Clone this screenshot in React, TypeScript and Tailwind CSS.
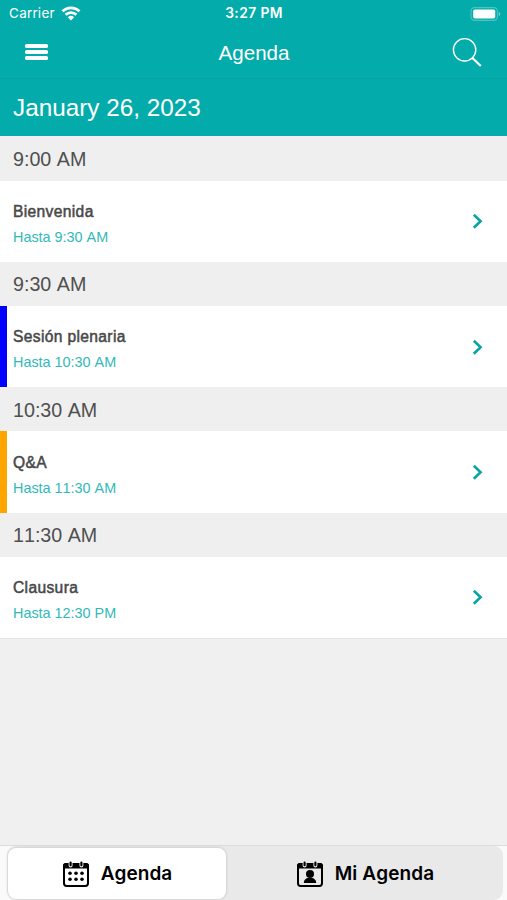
import { clsx } from 'clsx';

type Session = {
    start: string;
    title: string;
    until: string;
    marker?: string;
};

const sessions: Session[] = [
    { start: '9:00 AM', title: 'Bienvenida', until: 'Hasta 9:30 AM' },
    { start: '9:30 AM', title: 'Sesión plenaria', until: 'Hasta 10:30 AM', marker: 'bg-[#0000ff]' },
    { start: '10:30 AM', title: 'Q&A', until: 'Hasta 11:30 AM', marker: 'bg-[#ffa500]' },
    { start: '11:30 AM', title: 'Clausura', until: 'Hasta 12:30 PM' },
];

function WifiIcon() {
    return (
        <svg width="20" height="15" viewBox="0 0 20 15" fill="none" stroke="white" strokeWidth="2.7">
            <path d="M1.5 5.3a12.2 12.2 0 0 1 17 0" />
            <path d="M4.6 8.8a7.8 7.8 0 0 1 10.8 0" />
            <path d="M10 14.5 6.9 11.3a4.5 4.5 0 0 1 6.2 0Z" fill="white" stroke="none" />
        </svg>
    );
}

function BatteryIcon() {
    return (
        <svg width="31" height="14" viewBox="0 0 31 14">
            <rect x="1" y="0.6" width="26.4" height="12.8" rx="3.6" fill="none" stroke="#4dc4c3" strokeWidth="1.1" />
            <rect x="3.2" y="2.6" width="22" height="8.8" rx="1.6" fill="white" />
            <path d="M28.8 4.8c2 .8 2 3.6 0 4.4Z" fill="#6fd0cf" />
        </svg>
    );
}

function SearchIcon() {
    return (
        <svg width="31" height="31" viewBox="0 0 31 31" fill="none" stroke="white">
            <circle cx="12.6" cy="12.8" r="11.2" strokeWidth="1.4" />
            <path d="m20.4 21 8.4 8" strokeWidth="2.2" />
        </svg>
    );
}

function CalendarIcon({ person }: { person?: boolean }) {
    return (
        <svg width="26" height="27" viewBox="0 0 26 27">
            <rect x="1" y="3" width="24" height="21.9" rx="2.6" fill="none" stroke="black" strokeWidth="2" />
            <path d="M0 7.6V4.8A2.8 2.8 0 0 1 2.8 2h20.4A2.8 2.8 0 0 1 26 4.8v2.8Z" />
            <g stroke="#e4e4e4" strokeWidth="4" strokeLinecap="round">
                <path d="M7.6 2.4v2M18.4 2.4v2" />
            </g>
            <g stroke="black" strokeWidth="2.1" strokeLinecap="round">
                <path d="M7.6 1.6v2.6M18.4 1.6v2.6" />
            </g>
            {person ? (
                <g>
                    <circle cx="13" cy="13" r="4" />
                    <path d="M6.8 22c0-2.7 1.6-4.4 4-4.9h4.4c2.4.5 4 2.2 4 4.9Z" />
                </g>
            ) : (
                <g>
                    <circle cx="7" cy="12.2" r="1.8" />
                    <circle cx="13" cy="12.2" r="1.8" />
                    <circle cx="19" cy="12.2" r="1.8" />
                    <circle cx="7" cy="18.3" r="1.8" />
                    <circle cx="13" cy="18.3" r="1.8" />
                    <circle cx="19" cy="18.3" r="1.8" />
                </g>
            )}
        </svg>
    );
}

function SessionRow({ session }: { session: Session }) {
    return (
        <li>
            <h2 className="flex h-11 items-center bg-[#efefef] pt-0.5 pl-[13px] text-[19.7px] text-[#505050]">
                {session.start}
            </h2>
            <div className="flex h-[81.4px] items-center bg-white">
                <div className={clsx('h-full w-[7px]', session.marker)} />
                <div className="flex-1 pt-1.5 pl-1.5">
                    <p className="text-[15.6px] leading-5 tracking-[0.35px] text-[#484848] [-webkit-text-stroke:0.5px_#484848]">
                        {session.title}
                    </p>
                    <p className="mt-[5px] text-[14.4px] leading-5 text-[#32b9b7]">{session.until}</p>
                </div>
                <svg className="mr-6 h-4 w-[11px]" viewBox="0 0 11 16" fill="none">
                    <path d="m1.8 1.8 6.8 6.5-6.8 6.5" stroke="#08a5a3" strokeWidth="2.6" />
                </svg>
            </div>
        </li>
    );
}

export default function App() {
    return (
        <div className="flex h-[900px] w-[507px] flex-col overflow-hidden bg-[#f0f0f0] font-['Liberation_Sans',sans-serif] [font-kerning:none]">
            <header className="bg-[#03acaa] text-white">
                <div className="grid h-[27px] grid-cols-3 items-center pr-1.5 pl-[9px] font-[Inter,sans-serif] text-[13.5px]">
                    <div className="flex items-center gap-1.5">
                        <span className="tracking-[0.3px]">Carrier</span>
                        <WifiIcon />
                    </div>
                    <span className="pr-0.5 text-center text-[13.8px] font-semibold tracking-[0.4px]">3:27 PM</span>
                    <div className="flex justify-end">
                        <BatteryIcon />
                    </div>
                </div>
                <div className="flex h-[52px] items-center justify-between border-b border-[#04a3a1] pr-6 pl-[25px]">
                    <button type="button" aria-label="Menu" className="mb-0.5 flex w-[31px] flex-col gap-0.5">
                        <span className="h-1 w-[23px] rounded-[1.5px] bg-white" />
                        <span className="h-1 w-[23px] rounded-[1.5px] bg-white" />
                        <span className="h-1 w-[23px] rounded-[1.5px] bg-white" />
                    </button>
                    <h1 className="pt-px text-[20.6px]">Agenda</h1>
                    <button type="button" aria-label="Search">
                        <SearchIcon />
                    </button>
                </div>
                <div className="flex h-[57px] items-center pt-px pl-[13px] text-[24.3px]">January 26, 2023</div>
            </header>

            <ul className="mt-[0.6px] flex-1">
                {sessions.map((session) => (
                    <SessionRow key={session.start} session={session} />
                ))}
                <li className="h-px bg-[#e4e4e4]" />
            </ul>

            <nav className="h-[55px] border-t border-[#dcdcdc] bg-[#fafafa] pr-1 pl-[7px] font-[Inter,sans-serif] text-[19px] font-semibold text-black">
                <div className="flex h-[54px] rounded-r-[9px] rounded-l-[9px] bg-[#e9e9e9]">
                    <button
                        type="button"
                        className="mt-0.5 ml-px flex h-[51px] w-[218px] items-center justify-center gap-3 rounded-lg bg-white pt-px pl-px shadow-[0_0_3px_rgba(0,0,0,0.2)]"
                    >
                        <CalendarIcon />
                        <span className="tracking-[0.05px]">Agenda</span>
                    </button>
                    <button
                        type="button"
                        className="mt-0.5 flex h-[51px] flex-1 items-center justify-center gap-3 pt-px pl-0.5"
                    >
                        <CalendarIcon person />
                        <span className="tracking-[0.1px]">Mi Agenda</span>
                    </button>
                </div>
            </nav>
        </div>
    );
}
